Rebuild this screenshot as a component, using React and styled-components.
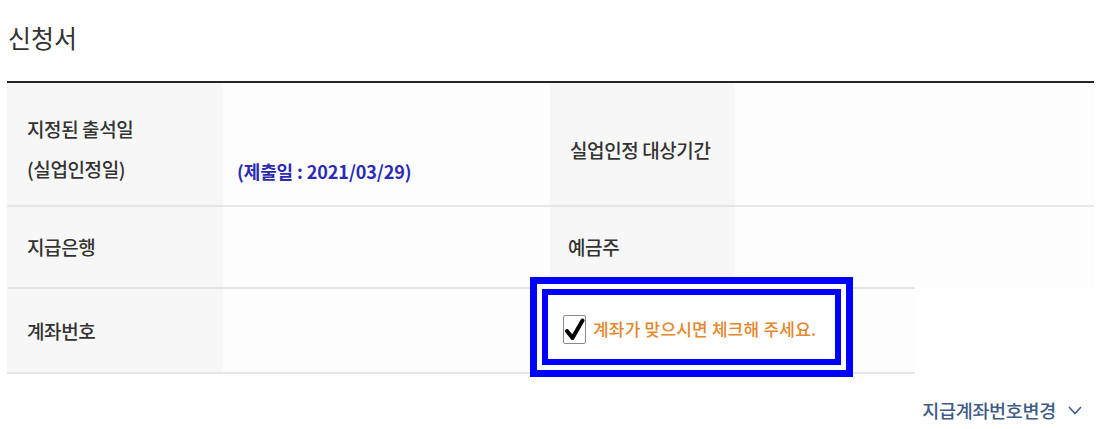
import styled, { createGlobalStyle } from "styled-components";

const GlobalStyle = createGlobalStyle`
  body {
    margin: 0;
    background: #fff;
    font-family: "Noto Sans CJK KR", "Noto Sans", sans-serif;
    color: #333;
  }
`;

const Page = styled.div`
  width: 1097px;
  padding: 0 3px 0 7px;
  box-sizing: border-box;
`;

const Title = styled.h2`
  margin: 0;
  height: 81px;
  padding: 20px 0 0 1px;
  box-sizing: border-box;
  font-size: 25px;
  font-weight: 400;
  line-height: 34px;
  color: #333;
`;

const Table = styled.div`
  border-top: 2px solid #262626;
`;

const Row = styled.div`
  display: grid;
  grid-template-columns: ${(p) => p.$cols};
  width: ${(p) => p.$width || "100%"};
  height: ${(p) => p.$height}px;
  border-top: ${(p) => (p.$lineTop ? "2px solid #e6e6e6" : "none")};
  border-bottom: ${(p) => (p.$lineBottom ? "2px solid #e6e6e6" : "none")};
`;

const Label = styled.div`
  display: flex;
  flex-direction: column;
  justify-content: center;
  gap: 12px;
  padding-left: ${(p) => p.$pad || 20}px;
  padding-top: ${(p) => p.$top || 0}px;
  background: #f7f7f7;
  font-size: 19px;
  font-weight: 500;
  line-height: 28px;
  letter-spacing: -0.4px;
  color: #333;
`;

const Value = styled.div`
  display: flex;
  align-items: ${(p) => p.$align || "center"};
  padding: ${(p) => p.$padding || "0 14px"};
  background: #fdfdfd;
`;

const DateText = styled.span`
  font-size: 18px;
  font-weight: 700;
  color: #2a2ab4;
  letter-spacing: -0.1px;
  line-height: 28px;
`;

const CheckCell = styled.div`
  position: relative;
  background: #fdfdfd;
`;

const Highlight = styled.div`
  position: absolute;
  left: -20px;
  top: -12px;
  width: 323px;
  height: 100px;
  box-sizing: border-box;
  border: 7px solid #0000ff;
  padding: 5px;
  background: #fff;
`;

const HighlightInner = styled.label`
  display: flex;
  align-items: center;
  gap: 7px;
  height: 100%;
  box-sizing: border-box;
  border: 6px solid #0000ff;
  padding: 4px 0 0 15px;
  background: #fff;
`;

const CheckBox = styled.span`
  position: relative;
  width: 23px;
  height: 29px;
  box-sizing: border-box;
  border: 1.5px solid #8a8a8a;
  border-radius: 2px;
  background: #fff;
  flex-shrink: 0;
`;

const CheckMark = styled.svg`
  position: absolute;
  left: 0;
  top: 1px;
`;

const CheckText = styled.span`
  font-size: 17px;
  font-weight: 500;
  color: #e4872d;
  letter-spacing: 0.2px;
  line-height: 24px;
`;

const Footer = styled.div`
  display: flex;
  justify-content: flex-end;
  padding: 24px 12px 0 0;
`;

const ChangeLink = styled.a`
  display: flex;
  align-items: center;
  gap: 12px;
  font-size: 18.5px;
  font-weight: 500;
  line-height: 24px;
  letter-spacing: -0.3px;
  color: #3f5b86;
  text-decoration: none;
  cursor: pointer;
`;

const App = () => {
  return (
    <Page>
      <GlobalStyle />
      <Title>신청서</Title>
      <Table>
        <Row $cols="216px 327px 185px 1fr" $height={122} $lineBottom>
          <Label $top={10}>
            <span>지정된 출석일</span>
            <span>(실업인정일)</span>
          </Label>
          <Value $align="flex-end" $padding="0 14px 20px">
            <DateText>(제출일 : 2021/03/29)</DateText>
          </Value>
          <Label $pad={20} $top={12}>
            <span>실업인정 대상기간</span>
          </Label>
          <Value />
        </Row>
        <Row $cols="216px 327px 185px 1fr" $height={80}>
          <Label>
            <span>지급은행</span>
          </Label>
          <Value />
          <Label $pad={18}>
            <span>예금주</span>
          </Label>
          <Value />
        </Row>
        <Row $cols="216px 327px 1fr" $width="908px" $height={83} $lineTop $lineBottom>
          <Label>
            <span>계좌번호</span>
          </Label>
          <Value />
          <CheckCell>
            <Highlight>
              <HighlightInner>
                <CheckBox>
                  <CheckMark width="21" height="26" viewBox="0 0 21 26">
                    <path
                      d="M3 14 L8.5 21 L18.5 3.5"
                      fill="none"
                      stroke="#000"
                      strokeWidth="4"
                      strokeLinecap="round"
                      strokeLinejoin="round"
                    />
                  </CheckMark>
                </CheckBox>
                <CheckText>계좌가 맞으시면 체크해 주세요.</CheckText>
              </HighlightInner>
            </Highlight>
          </CheckCell>
        </Row>
      </Table>
      <Footer>
        <ChangeLink>
          지급계좌번호변경
          <svg width="14" height="9" viewBox="0 0 14 9">
            <polyline points="1,1 7,7.5 13,1" fill="none" stroke="#3f5b86" strokeWidth="1.6" />
          </svg>
        </ChangeLink>
      </Footer>
    </Page>
  );
};

export default App;
